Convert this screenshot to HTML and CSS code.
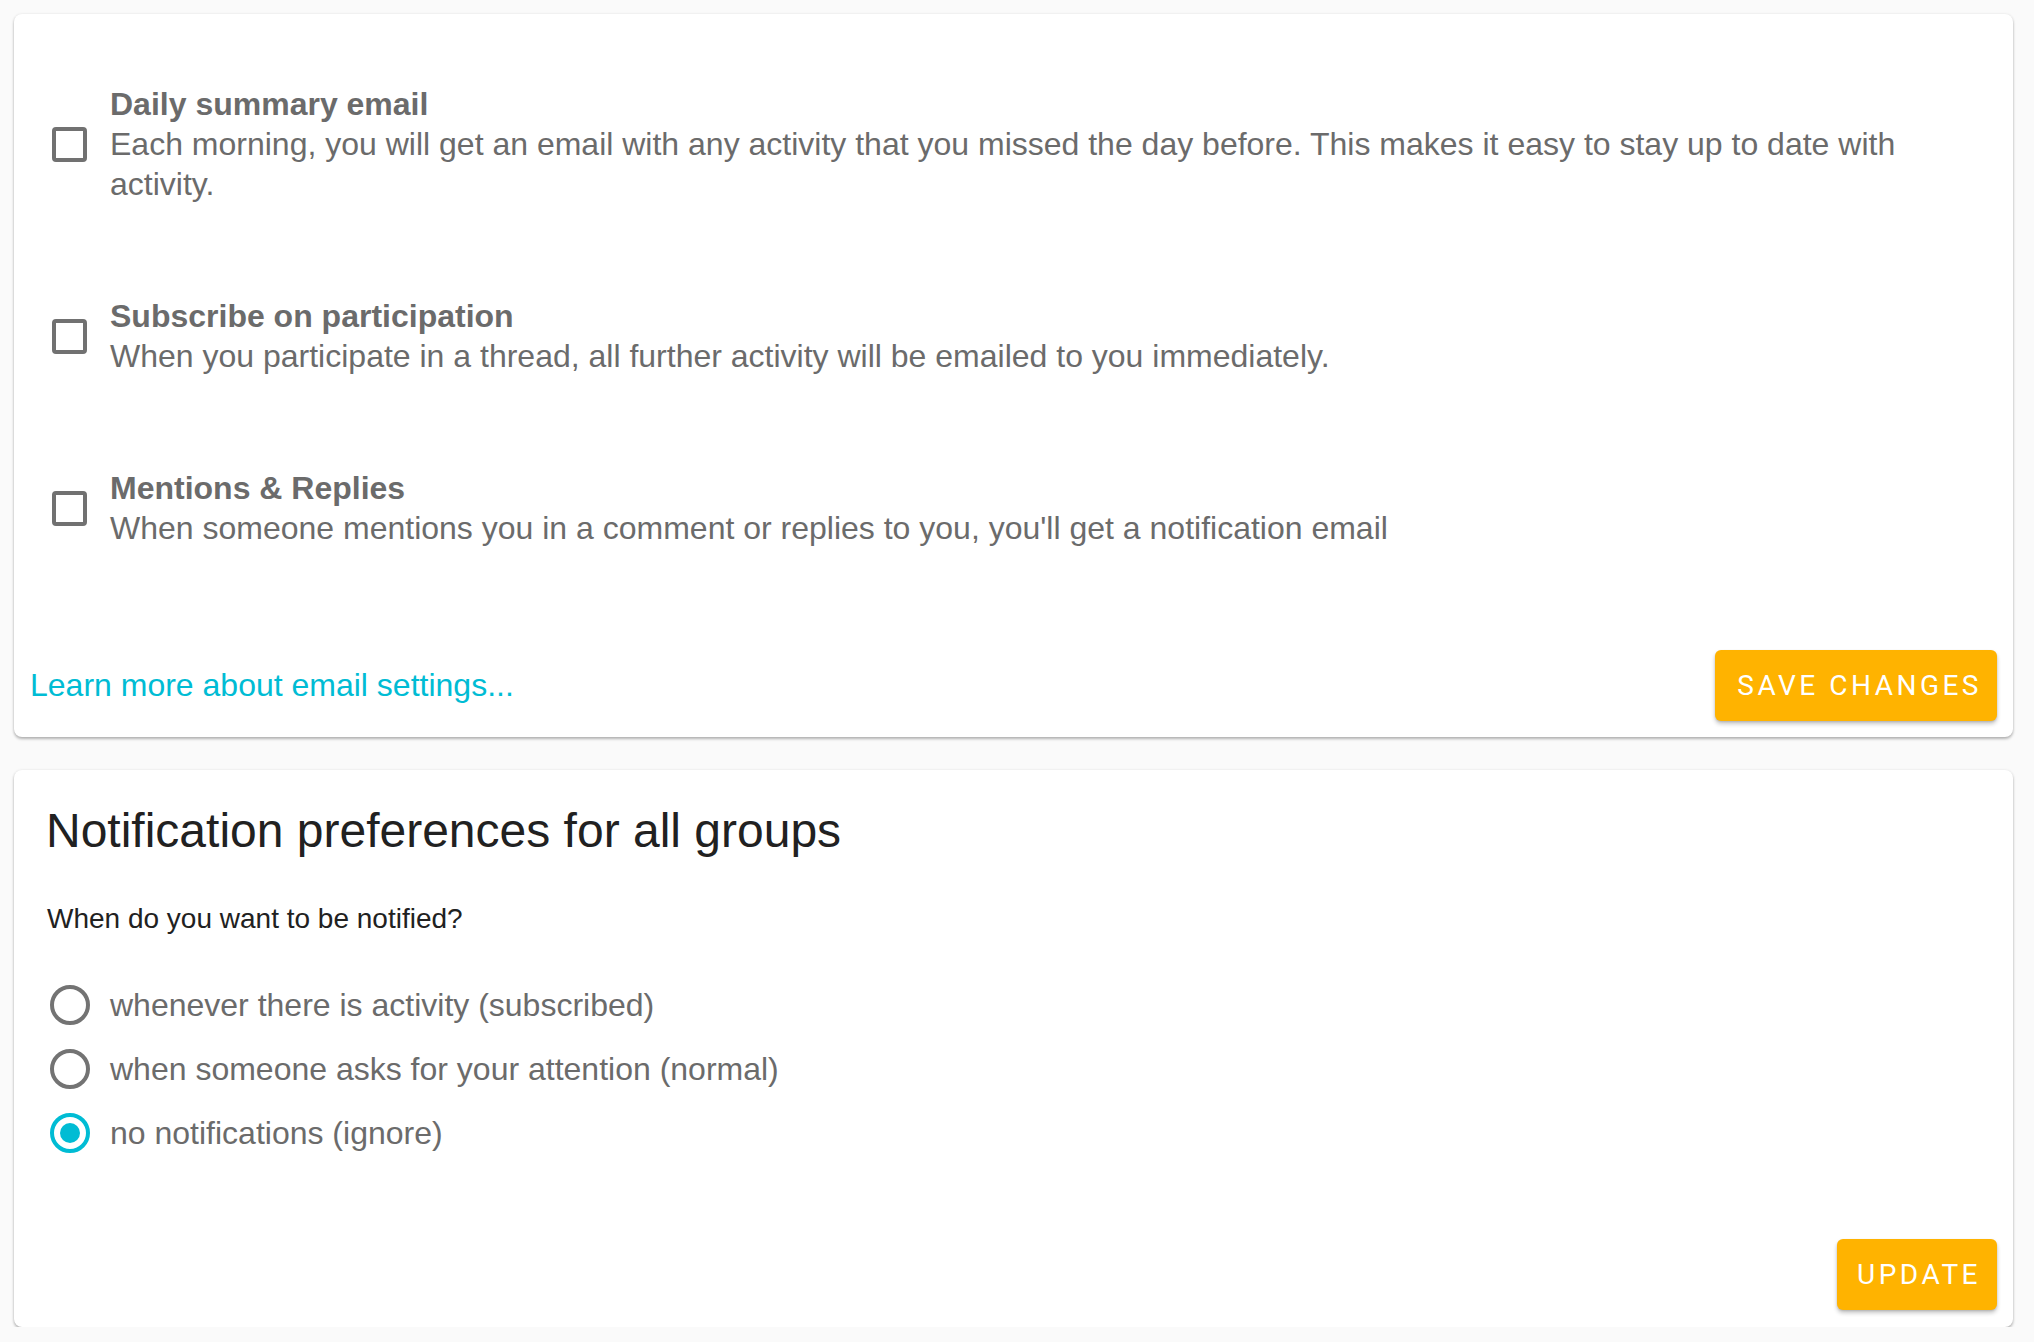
FILE: index.html
```html
<!DOCTYPE html>
<html lang="en">
<head>
<meta charset="utf-8">
<title>Email settings</title>
<link rel="stylesheet" href="styles.css">
</head>
<body>
<div class="page">
  <section class="card card-email">
    <div class="options">
      <label class="option">
        <span class="checkbox"></span>
        <span class="option-text">
          <span class="option-title">Daily summary email</span>
          <span class="option-desc">Each morning, you will get an email with any activity that you missed the day before. This makes it easy to stay up to date with activity.</span>
        </span>
      </label>
      <label class="option">
        <span class="checkbox"></span>
        <span class="option-text">
          <span class="option-title">Subscribe on participation</span>
          <span class="option-desc">When you participate in a thread, all further activity will be emailed to you immediately.</span>
        </span>
      </label>
      <label class="option">
        <span class="checkbox"></span>
        <span class="option-text">
          <span class="option-title">Mentions &amp; Replies</span>
          <span class="option-desc">When someone mentions you in a comment or replies to you, you'll get a notification email</span>
        </span>
      </label>
    </div>
    <div class="card-footer">
      <a class="link" href="#">Learn more about email settings...</a>
      <button class="btn btn-save" type="button">SAVE CHANGES</button>
    </div>
  </section>

  <section class="card card-notify">
    <h2 class="heading">Notification preferences for all groups</h2>
    <p class="question">When do you want to be notified?</p>
    <div class="radios">
      <label class="radio-row"><span class="radio"></span><span class="radio-label">whenever there is activity (subscribed)</span></label>
      <label class="radio-row"><span class="radio"></span><span class="radio-label">when someone asks for your attention (normal)</span></label>
      <label class="radio-row"><span class="radio radio-on"></span><span class="radio-label">no notifications (ignore)</span></label>
    </div>
    <div class="card-footer card-footer-end">
      <button class="btn btn-update" type="button">UPDATE</button>
    </div>
  </section>
</div>
</body>
</html>
```

FILE: styles.css
```css
html, body {
  margin: 0;
  padding: 0;
  background: #fafafa;
}

body {
  font-family: "Liberation Sans", Arial, Helvetica, sans-serif;
  color: #212121;
}

.page {
  padding: 14px 21px 0 14px;
  display: flex;
  flex-direction: column;
  gap: 33px;
}

.card {
  background: #ffffff;
  border-radius: 8px;
  box-shadow: 0 2px 3px rgba(0, 0, 0, 0.28), 0 0 3px rgba(0, 0, 0, 0.08);
}

.card-email {
  padding: 24px 16px 16px 16px;
}

.options {
  display: flex;
  flex-direction: column;
  padding-left: 22px;
}

.option {
  display: flex;
  align-items: center;
  gap: 23px;
  padding: 46px 0;
}

.checkbox {
  flex: none;
  width: 35px;
  height: 35px;
  box-sizing: border-box;
  border: 4px solid #717171;
  border-radius: 4px;
}

.option-text {
  display: flex;
  flex-direction: column;
  font-size: 32px;
  line-height: 40px;
  color: #6b6b6b;
}

.option-title {
  font-weight: bold;
}

.card-footer {
  display: flex;
  align-items: center;
  justify-content: space-between;
  margin-top: 56px;
}

.card-footer-end {
  justify-content: flex-end;
}

.link {
  font-size: 32px;
  color: #00bcd4;
  text-decoration: none;
}

.btn {
  font-family: Roboto, "Liberation Sans", sans-serif;
  font-size: 28px;
  letter-spacing: 3.5px;
  color: #ffffff;
  background: #ffb300;
  border: none;
  border-radius: 6px;
  height: 71px;
  box-shadow: 0 3px 4px rgba(0, 0, 0, 0.22), 0 1px 2px rgba(0, 0, 0, 0.12);
  display: inline-flex;
  align-items: center;
  cursor: pointer;
}

.btn-save {
  padding: 0 15px 0 22px;
}

.btn-update {
  padding: 0 16px 0 20px;
}

.card-notify {
  padding: 33px 16px 17px 32px;
}

.heading {
  margin: 0;
  font-size: 48px;
  line-height: 56px;
  font-weight: normal;
  color: #212121;
}

.question {
  margin: 40px 0 0 1px;
  font-size: 28px;
  line-height: 40px;
  color: #212121;
}

.radios {
  display: flex;
  flex-direction: column;
  margin-top: 34px;
  padding-left: 4px;
}

.radio-row {
  display: flex;
  align-items: center;
  gap: 20px;
  height: 64px;
}

.radio {
  flex: none;
  width: 40px;
  height: 40px;
  box-sizing: border-box;
  border: 4px solid #737373;
  border-radius: 50%;
  display: flex;
  align-items: center;
  justify-content: center;
}

.radio-on {
  border-color: #00bcd4;
}

.radio-on::after {
  content: "";
  width: 20px;
  height: 20px;
  border-radius: 50%;
  background: #00bcd4;
}

.radio-label {
  font-size: 32px;
  line-height: 40px;
  color: #6b6b6b;
}

.card-notify .card-footer {
  margin-top: 74px;
}
```
